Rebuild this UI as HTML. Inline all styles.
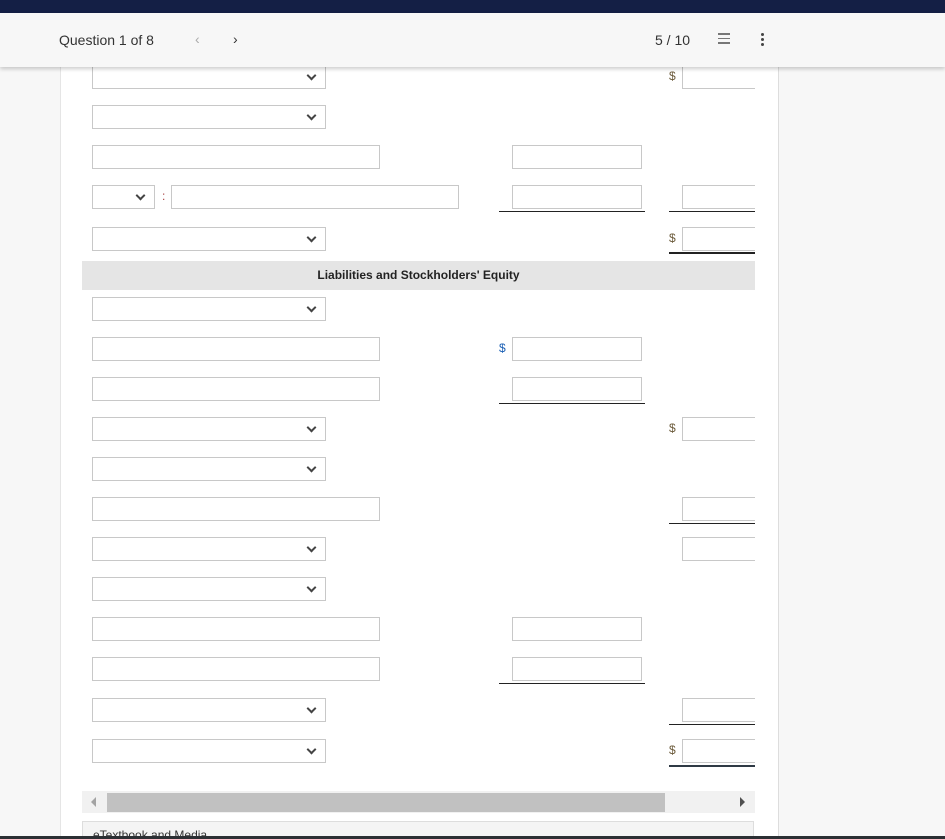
<!DOCTYPE html>
<html><head><style>
html,body{margin:0;width:945px;height:839px;overflow:hidden}
body{background:#f7f7f7;font-family:"Liberation Sans",sans-serif;position:relative}
.top{position:absolute;left:0;top:0;width:945px;height:13px;background:#141f45}
.hdr{position:absolute;left:0;top:13px;width:945px;height:54px;background:#f7f7f7;box-shadow:0 2px 4px rgba(0,0,0,.2);z-index:5;color:#333;font-size:14px}
.panel{position:absolute;left:60px;top:60px;width:717px;height:779px;background:#fff;border-right:1px solid #ddd;border-left:1px solid #e5e5e5}
.b{position:absolute;border:1px solid #c8c8c8;box-sizing:border-box;height:24px;background:#fff}
.dd::after{content:"";position:absolute;right:10px;top:6px;width:5px;height:5px;border-right:2px solid #444;border-bottom:2px solid #444;transform:rotate(45deg)}
.u{position:absolute;height:1px;background:#222}
.d{position:absolute;font-size:12px;color:#6b5a3a}
.eq{position:absolute;left:82px;top:261px;width:673px;height:29px;background:#e5e5e5;text-align:center;font-size:12px;font-weight:bold;line-height:29px;color:#222}
</style></head><body>
<div class="top"></div>
<div class="hdr">
<span style="position:absolute;left:59px;top:19px">Question 1 of 8</span>
<span style="position:absolute;left:195px;top:18px;color:#aaa">&#8249;</span>
<span style="position:absolute;left:233px;top:18px;color:#333">&#8250;</span>
<span style="position:absolute;left:655px;top:19px">5 / 10</span>
<span style="position:absolute;left:718px;top:20px;width:12px;height:11px;border-top:2px solid #777;border-bottom:2px solid #777;box-sizing:border-box"><span style="position:absolute;left:0;top:3px;width:12px;height:1px;background:#777"></span></span>
<span style="position:absolute;left:761px;top:20px;width:3px;height:3px;background:#444;border-radius:2px;box-shadow:0 5px 0 #444,0 10px 0 #444"></span>
</div>
<div class="panel"></div>

<div class="b dd" style="left:92px;top:65px;width:234px"></div>
<div class="d" style="left:669px;top:69px">$</div><div class="b" style="left:682px;top:65px;width:80px"></div>
<div class="b dd" style="left:92px;top:105px;width:234px"></div>
<div class="b" style="left:92px;top:145px;width:288px"></div><div class="b" style="left:512px;top:145px;width:130px"></div>
<div class="b dd" style="left:92px;top:185px;width:63px"></div><div class="d" style="left:162px;top:189px;color:#a44">:</div>
<div class="b" style="left:171px;top:185px;width:288px"></div><div class="b" style="left:512px;top:185px;width:130px"></div>
<div class="u" style="left:499px;top:211px;width:146px"></div>
<div class="b" style="left:682px;top:185px;width:80px"></div><div class="u" style="left:669px;top:211px;width:86px"></div>
<div class="b dd" style="left:92px;top:227px;width:234px"></div>
<div class="d" style="left:669px;top:231px">$</div><div class="b" style="left:682px;top:227px;width:80px"></div>
<div class="u" style="left:669px;top:252px;width:86px;height:2px"></div>
<div class="eq">Liabilities and Stockholders' Equity</div>

<div class="b dd" style="left:92px;top:297px;width:234px"></div>
<div class="b" style="left:92px;top:337px;width:288px"></div><div class="d" style="left:499px;top:341px;color:#1a5fb4">$</div><div class="b" style="left:512px;top:337px;width:130px"></div>
<div class="b" style="left:92px;top:377px;width:288px"></div><div class="b" style="left:512px;top:377px;width:130px"></div><div class="u" style="left:499px;top:403px;width:146px"></div>
<div class="b dd" style="left:92px;top:417px;width:234px"></div><div class="d" style="left:669px;top:421px">$</div><div class="b" style="left:682px;top:417px;width:80px"></div>
<div class="b dd" style="left:92px;top:457px;width:234px"></div>
<div class="b" style="left:92px;top:497px;width:288px"></div><div class="b" style="left:682px;top:497px;width:80px"></div><div class="u" style="left:669px;top:523px;width:86px"></div>
<div class="b dd" style="left:92px;top:537px;width:234px"></div><div class="b" style="left:682px;top:537px;width:80px"></div>
<div class="b dd" style="left:92px;top:577px;width:234px"></div>
<div class="b" style="left:92px;top:617px;width:288px"></div><div class="b" style="left:512px;top:617px;width:130px"></div>
<div class="b" style="left:92px;top:657px;width:288px"></div><div class="b" style="left:512px;top:657px;width:130px"></div><div class="u" style="left:499px;top:683px;width:146px"></div>
<div class="b dd" style="left:92px;top:698px;width:234px"></div><div class="b" style="left:682px;top:698px;width:80px"></div><div class="u" style="left:669px;top:724px;width:86px"></div>
<div class="b dd" style="left:92px;top:739px;width:234px"></div><div class="d" style="left:669px;top:743px">$</div><div class="b" style="left:682px;top:739px;width:80px"></div>
<div class="u" style="left:669px;top:765px;width:86px;height:2px;background:#2f3a45"></div>
<div style="position:absolute;left:755px;top:60px;width:22px;height:720px;background:#fff"></div>

<div style="position:absolute;left:82px;top:791px;width:673px;height:22px;background:#f1f1f1"></div>
<div style="position:absolute;left:107px;top:793px;width:558px;height:19px;background:#c1c1c1"></div>
<div style="position:absolute;left:91px;top:797px;border:5px solid transparent;border-right-color:#a3a3a3;border-left:0"></div>
<div style="position:absolute;left:740px;top:797px;border:5px solid transparent;border-left-color:#505050;border-right:0"></div>
<div style="position:absolute;left:82px;top:821px;width:672px;height:20px;background:#f4f4f4;border:1px solid #ddd;font-size:12px;color:#333;padding-left:10px;line-height:26px;box-sizing:border-box">eTextbook and Media</div>
<div style="position:absolute;left:0;top:836px;width:945px;height:3px;background:#2b2f33"></div>
</body></html>
